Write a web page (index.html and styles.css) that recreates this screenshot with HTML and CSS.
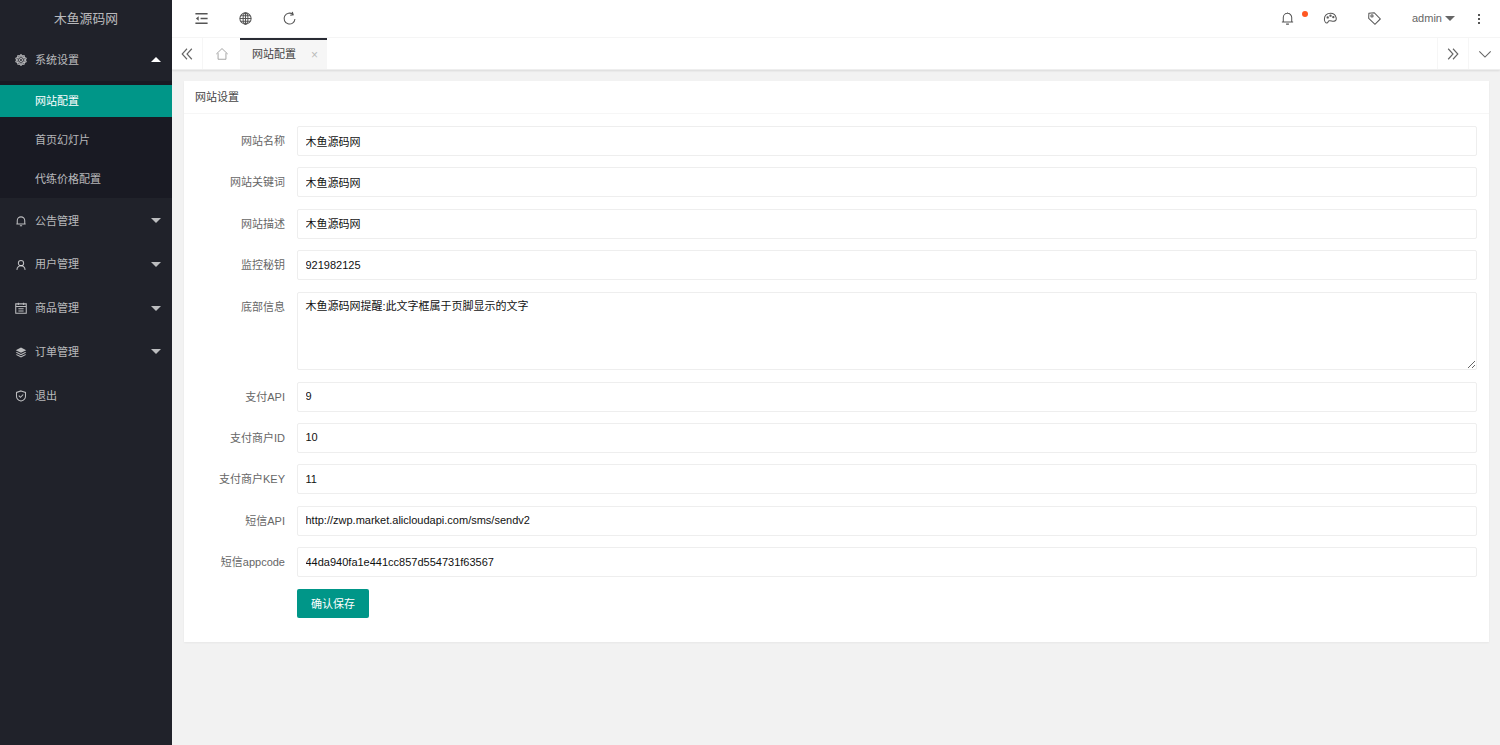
FILE: index.html
```html
<!DOCTYPE html>
<html lang="zh-CN">
<head>
<meta charset="utf-8">
<title>网站设置</title>
<link rel="stylesheet" href="styles.css">
</head>
<body>
<div class="app">
  <aside class="side">
    <div class="logo">木鱼源码网</div>
    <nav class="menu">
      <a class="item open"><svg class="ico gear" viewBox="0 0 16 16"><circle cx="8" cy="8" r="2"/><circle cx="8" cy="8" r="4.400"/><path d="M8 .8l1.700 1.800 2.400-.4.500 2.400 2.300 1-1 2.400 1 2.200-2.300 1.100-.5 2.400-2.400-.3L8 15.200l-1.700-1.800-2.400.3-.5-2.400-2.300-1.100 1-2.200-1-2.400 2.300-1 .5-2.400 2.400.4z"/></svg><span>系统设置</span><i class="caret up"></i></a>
      <div class="sub">
        <a class="subitem on">网站配置</a>
        <a class="subitem">首页幻灯片</a>
        <a class="subitem">代练价格配置</a>
      </div>
      <a class="item"><svg class="ico" viewBox="0 0 16 16"><path d="M3 12V7.500a5 5 0 0 1 10 0V12M1.800 12h12.400M6.500 14.200h3"/></svg><span>公告管理</span><i class="caret"></i></a>
      <a class="item"><svg class="ico" viewBox="0 0 16 16"><circle cx="8" cy="5.500" r="3.500"/><path d="M2.500 14.500c.4-3.400 2.400-5.500 5.500-5.500s5.100 2.100 5.500 5.500"/></svg><span>用户管理</span><i class="caret"></i></a>
      <a class="item"><svg class="ico" viewBox="0 0 16 16"><path d="M1 2.500h14v12.500H1zM1 6h14M4.500 1v3M11.500 1v3M4.500 9h7M4.500 12h7"/></svg><span>商品管理</span><i class="caret"></i></a>
      <a class="item"><svg class="ico fill" viewBox="0 0 16 16"><path d="M8 2l7 3.500L8 9 1 5.500z"/><path d="M2.600 8L8 10.700 13.400 8 15 8.800 8 12.300 1 8.800z"/><path d="M2.600 11L8 13.700 13.400 11 15 11.800 8 15.300 1 11.800z"/></svg><span>订单管理</span><i class="caret"></i></a>
      <a class="item"><svg class="ico" viewBox="0 0 16 16"><path d="M8 1.200l6 2v5c0 3.300-2.600 5.500-6 6.600-3.400-1.100-6-3.300-6-6.600v-5z"/><path d="M5 7.500l2.300 2.300L11 6"/></svg><span>退出</span></a>
    </nav>
  </aside>
  <div class="main">
    <header class="top">
      <div class="tools">
        <svg class="tool bold" viewBox="0 0 16 16"><path d="M1.500 3h13M7 8h7.500M1.500 13h13"/><path class="solid" d="M5 5.500L2 8l3 2.500z"/></svg>
        <svg class="tool" viewBox="0 0 16 16"><circle cx="8" cy="8" r="6"/><ellipse cx="8" cy="8" rx="2.600" ry="6"/><path d="M8 2v12M2 8h12M3 5h10M3 11h10"/></svg>
        <svg class="tool" viewBox="0 0 16 16"><path d="M13.800 8.500A5.800 5.800 0 1 1 11.800 3.700M11 1l1 3-3.200.5"/></svg>
      </div>
      <div class="right">
        <span class="bell"><svg class="tool" viewBox="0 0 16 16"><path d="M3.500 11.800V7a4.500 4.500 0 0 1 9 0v4.800M2 11.800h12M6.500 14h3M8 1.500v1"/></svg><i class="dot"></i></span>
        <svg class="tool theme" viewBox="0 0 16 16"><path d="M8 2.500c-4 0-6.500 2.600-6.500 6 0 2 1.200 4.200 2.600 4.200 1.500 0 1-1.800 2.400-2.200 2-.5 3.400.8 5.500.3 1.800-.4 2.500-1.800 2-3.600C13.300 4 11 2.500 8 2.500z"/><circle cx="5" cy="6.800" r=".7"/><circle cx="8" cy="5" r=".7"/><circle cx="11" cy="6.500" r=".7"/></svg>
        <svg class="tool tag" viewBox="0 0 16 16"><path d="M2 2.500l5.700-.7 6.500 6.700-5.700 5.700L1.800 7.800z"/><circle cx="5.300" cy="5.300" r="1.200"/></svg>
        <span class="user">admin<i class="caret dark"></i></span>
        <span class="more"><i></i><i></i><i></i></span>
      </div>
    </header>
    <div class="tabs">
      <span class="tabbtn first"><svg viewBox="0 0 16 16"><path d="M8 2L2.500 8 8 14M13.500 2L8 8l5.500 6"/></svg></span>
      <span class="tabbtn home"><svg viewBox="0 0 16 16"><path d="M1.500 8L8 1.800 14.500 8M3.500 7v7h9V7"/></svg></span>
      <span class="tab"><b>网站配置</b><em>×</em></span>
      <span class="tabfill"></span>
      <span class="tabbtn last"><svg viewBox="0 0 16 16"><path d="M2.500 2L8 8l-5.500 6M8 2l5.500 6L8 14"/></svg></span>
      <span class="tabbtn down"><svg viewBox="0 0 16 16"><path d="M1.500 5L8 11.500 14.500 5"/></svg></span>
    </div>
    <main class="body">
      <section class="card">
        <h2 class="card-title">网站设置</h2>
        <form class="form">
          <label>网站名称</label><input value="木鱼源码网">
          <label>网站关键词</label><input value="木鱼源码网">
          <label>网站描述</label><input value="木鱼源码网">
          <label>监控秘钥</label><input value="921982125">
          <label>底部信息</label><textarea>木鱼源码网提醒:此文字框属于页脚显示的文字</textarea>
          <label>支付API</label><input value="9">
          <label>支付商户ID</label><input value="10">
          <label>支付商户KEY</label><input value="11">
          <label>短信API</label><input value="http://zwp.market.alicloudapi.com/sms/sendv2">
          <label>短信appcode</label><input value="44da940fa1e441cc857d554731f63567">
          <span></span><div><button type="button">确认保存</button></div>
        </form>
      </section>
    </main>
  </div>
</div>
</body>
</html>
```
FILE: styles.css
```css
* { box-sizing: border-box; }
html, body { margin: 0; height: 100%; overflow: hidden; }
body { font: 11px/1.5 "Liberation Sans", "Noto Sans CJK SC", sans-serif; color: #333; background: #f2f2f2; }
.app { display: flex; height: 745px; }

.side { width: 172px; flex: none; background: #20222a; color: rgba(255,255,255,.7); }
.logo { height: 38px; line-height: 37px; text-align: center; font-size: 12.8px; color: rgba(255,255,255,.7); }
.menu { display: flex; flex-direction: column; }
.item { position: relative; display: flex; align-items: center; height: 43.8px; padding-left: 15px; }
.item.open { height: 43px; padding-top: 1px; }
.item span { margin-left: 8px; }
.ico { width: 12px; height: 12px; flex: none; fill: none; stroke: rgba(255,255,255,.7); stroke-width: 1.4; }
.ico.fill { fill: rgba(255,255,255,.7); stroke: none; }
.caret { position: absolute; right: 11px; top: 19px; border: 5px solid transparent; border-top-color: rgba(255,255,255,.7); border-bottom: 0; }
.caret.up { border-top: 0; border-bottom: 5px solid #fff; }
.sub { background: #191a23; height: 117px; padding-top: 4px; margin-bottom: 1px; }
.subitem { display: block; height: 39px; line-height: 39px; padding-left: 35px; }
.subitem.on { height: 32px; line-height: 32px; margin-bottom: 4px; background: #009688; color: #fff; }

.main { flex: 1; min-width: 0; display: flex; flex-direction: column; }
.top { height: 38px; background: #fff; border-bottom: 1px solid #f6f6f6; display: flex; justify-content: space-between; align-items: center; }
.tools { display: flex; gap: 29px; padding-left: 22px; }
.tool { width: 15px; height: 15px; fill: none; stroke: #555; stroke-width: 1.1; display: block; }
.tool.bold { stroke-width: 1.5; }
.solid { fill: #555; stroke: none; }
.right { display: flex; align-items: center; color: #666; padding-right: 20px; }
.bell { position: relative; margin-right: 28px; }
.dot { position: absolute; top: 0; right: -13px; width: 6px; height: 6px; border-radius: 50%; background: #ff5722; }
.theme { margin-right: 29px; }
.tag { margin-right: 30px; }
.user { position: relative; width: 55px; font-size: 11px; margin-right: 5px; }
.caret.dark { top: 6px; right: 12px; border-top-color: #666; }
.more { display: flex; flex-direction: column; gap: 2px; margin-left: 6px; width: 2px; }
.more i { width: 2px; height: 2px; background: #555; }

.tabs { height: 32px; background: #fff; display: flex; box-shadow: 0 1px 2px rgba(0,0,0,.1); position: relative; border-bottom: 1px solid #eee; }
.tabbtn { width: 31px; display: flex; align-items: center; justify-content: center; border-right: 1px solid #f6f6f6; flex: none; }
.tabbtn svg { width: 14px; height: 14px; fill: none; stroke: #666; stroke-width: 1.3; }
.tabbtn.home { width: 37px; border-right: 0; }
.tabbtn.home svg { stroke: #999; stroke-width: 1; }
.tab { width: 87px; background: #f6f6f6; border-top: 2px solid #292b34; display: flex; align-items: center; padding-left: 12px; position: relative; }
.tab b { font-weight: 400; font-size: 11px; color: #444; }
.tab em { position: absolute; right: 9px; font-style: normal; font-size: 12px; color: #bbb; }
.tabfill { flex: 1; }
.tabbtn.last { border-left: 1px solid #f6f6f6; width: 32px; }
.tabbtn.down { border-right: 0; }

.body { flex: 1; padding: 11px 11px 0 12px; }
.card { background: #fff; height: 561px; box-shadow: 0 1px 2px rgba(0,0,0,.05); }
.card-title { margin: 0; height: 33px; line-height: 32px; padding-left: 11px; font-size: 11px; font-weight: 400; color: #444; border-bottom: 1px solid #f6f6f6; }
.form { display: grid; grid-template-columns: 113px 1fr; row-gap: 11.4px; padding: 12px 12px 0 0; }
.form label { text-align: right; padding-right: 12px; line-height: 30px; color: #666; font-size: 11px; }
.form input, .form textarea { display: block; width: 100%; height: 30px; padding: 0 7.5px 1px; border: 1px solid #eee; border-radius: 2px; font: 11px "Liberation Sans", "Noto Sans CJK SC", sans-serif; color: #111; background: #fff; outline: 0; }
.form textarea { height: 78.600px; padding: 5px 7.5px; line-height: 16px; }
button { display: block; width: 72px; height: 29.500px; background: #009688; color: #fff; border: 0; border-radius: 2px; font: 11px "Liberation Sans", "Noto Sans CJK SC", sans-serif; }
```
